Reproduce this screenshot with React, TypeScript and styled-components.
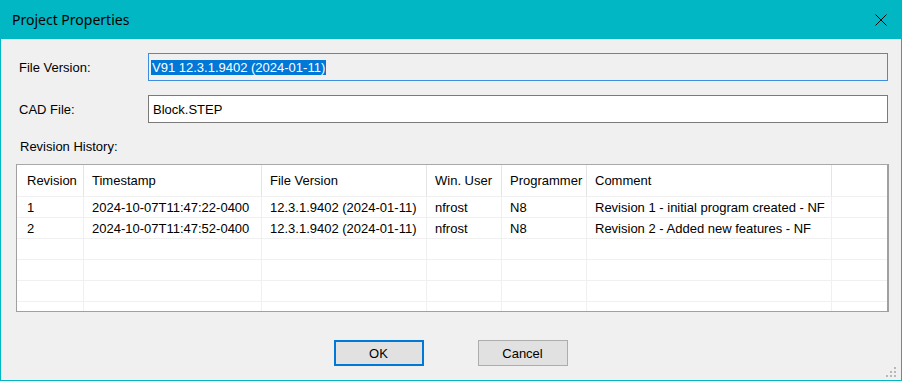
import styled, { createGlobalStyle } from 'styled-components';

const GlobalStyle = createGlobalStyle`
    html, body {
        margin: 0;
        padding: 0;
        background: #f0f0f0;
    }
    * {
        box-sizing: border-box;
    }
`

const columns = [
    { title: 'Revision', width: 67 },
    { title: 'Timestamp', width: 178 },
    { title: 'File Version', width: 165 },
    { title: 'Win. User', width: 75 },
    { title: 'Programmer', width: 85 },
    { title: 'Comment', width: 245 },
];

const rows = [
    ['1', '2024-10-07T11:47:22-0400', '12.3.1.9402 (2024-01-11)', 'nfrost', 'N8', 'Revision 1 - initial program created - NF'],
    ['2', '2024-10-07T11:47:52-0400', '12.3.1.9402 (2024-01-11)', 'nfrost', 'N8', 'Revision 2 - Added new features - NF'],
    ['', '', '', '', '', ''],
    ['', '', '', '', '', ''],
    ['', '', '', '', '', ''],
    ['', '', '', '', '', ''],
];

const gridTemplate = columns.map((c) => `${c.width}px`).join(' ') + ' 1fr';

export const Window = styled.div`
    position: relative;
    display: flex;
    flex-direction: column;
    width: 902px;
    height: 381px;
    background: #f0f0f0;
    border: 1px solid #00b7c3;
    border-top: none;
    font-family: "Liberation Sans", Arial, sans-serif;
    font-size: 13px;
    color: #000;
`

export const TitleBar = styled.div`
    display: flex;
    align-items: center;
    justify-content: space-between;
    height: 39px;
    margin: 0 -1px;
    padding: 0 15px 1px 12px;
    background: #00b7c3;
    flex-shrink: 0;
`

export const Title = styled.span`
    font-family: "Noto Sans", "Open Sans", sans-serif;
    font-size: 14px;
    color: #000;
`

export const CloseIcon = styled.svg`
    width: 12px;
    height: 12px;
    margin-top: 1px;
`

export const Body = styled.div`
    display: flex;
    flex-direction: column;
    flex: 1;
    padding: 14px 13px 0 14px;
`

export const FieldRow = styled.div`
    display: flex;
    align-items: center;
    height: 28px;
    margin-bottom: 14px;
`

export const Label = styled.span`
    width: 133px;
    padding-left: 4px;
    flex-shrink: 0;
`

export const Input = styled.div<{ $readonly?: boolean }>`
    display: flex;
    align-items: center;
    flex: 1;
    height: 28px;
    padding-left: ${(p) => (p.$readonly ? '2px' : '4px')};
    background: ${(p) => (p.$readonly ? '#f0f0f0' : '#ffffff')};
    border: 1px solid ${(p) => (p.$readonly ? '#3d8ee0' : '#7a7a7a')};
`

export const Selected = styled.span`
    background: #0078d7;
    color: #fff;
    line-height: 15px;
    padding: 0 1px;
`

export const SectionLabel = styled.div`
    padding-left: 5px;
    height: 15px;
    line-height: 15px;
    margin-top: 2px;
    margin-bottom: 10px;
`

export const ListView = styled.div`
    height: 148px;
    margin-left: 1px;
    margin-right: -1px;
    background: #fff;
    border: 1px solid #a0a0a0;
    border-right-width: 2px;
    border-top-color: #a8a8a8;
    overflow: hidden;
`

export const HeaderRow = styled.div`
    display: grid;
    grid-template-columns: ${gridTemplate};
    height: 31px;
`

export const HeaderCell = styled.div<{ $first?: boolean }>`
    display: flex;
    align-items: center;
    padding-left: ${(p) => (p.$first ? '10px' : '8px')};
    border-right: 1px solid #e5e5e5;
    white-space: nowrap;
    padding-bottom: 1px;
`

export const Row = styled.div`
    display: grid;
    grid-template-columns: ${gridTemplate};
    height: 21px;
    border-top: 1px solid #f0f0f0;
`

export const Cell = styled.div<{ $first?: boolean }>`
    display: flex;
    align-items: center;
    padding-left: ${(p) => (p.$first ? '10px' : '8px')};
    border-right: 1px solid #f0f0f0;
    white-space: nowrap;
    overflow: hidden;
`

export const Filler = styled.div``

export const Buttons = styled.div`
    display: flex;
    justify-content: center;
    gap: 54px;
    margin-top: 28px;
    padding-right: 2px;
`

export const Button = styled.button<{ $default?: boolean }>`
    width: 90px;
    height: 26px;
    padding: 0;
    font-family: "Liberation Sans", Arial, sans-serif;
    font-size: 13px;
    color: #000;
    background: #e1e1e1;
    border: ${(p) => (p.$default ? '2px solid #0078d7' : '1px solid #adadad')};
`

export const Grip = styled.svg`
    position: absolute;
    right: 5px;
    bottom: 3px;
    width: 10px;
    height: 10px;
`

export default function App() {
    return (
        <>
            <GlobalStyle />
            <Window>
                <TitleBar>
                    <Title>Project Properties</Title>
                    <CloseIcon viewBox="0 0 12 12">
                        <path d="M0.5 0.5 L11.5 11.5 M11.5 0.5 L0.5 11.5" stroke="#000" strokeWidth="1" fill="none" />
                    </CloseIcon>
                </TitleBar>
                <Body>
                    <FieldRow>
                        <Label>File Version:</Label>
                        <Input $readonly>
                            <Selected>V91 12.3.1.9402 (2024-01-11)</Selected>
                        </Input>
                    </FieldRow>
                    <FieldRow>
                        <Label>CAD File:</Label>
                        <Input>Block.STEP</Input>
                    </FieldRow>
                    <SectionLabel>Revision History:</SectionLabel>
                    <ListView>
                        <HeaderRow>
                            {columns.map((c, i) => (
                                <HeaderCell key={c.title} $first={i === 0}>{c.title}</HeaderCell>
                            ))}
                            <Filler />
                        </HeaderRow>
                        {rows.map((r, ri) => (
                            <Row key={ri}>
                                {r.map((v, ci) => (
                                    <Cell key={ci} $first={ci === 0}>{v}</Cell>
                                ))}
                                <Filler />
                            </Row>
                        ))}
                    </ListView>
                    <Buttons>
                        <Button $default>OK</Button>
                        <Button>Cancel</Button>
                    </Buttons>
                </Body>
                <Grip viewBox="0 0 10 10">
                    <rect x="8" y="0" width="2" height="2" fill="#b8b8b8" />
                    <rect x="4" y="4" width="2" height="2" fill="#b8b8b8" />
                    <rect x="8" y="4" width="2" height="2" fill="#b8b8b8" />
                    <rect x="0" y="8" width="2" height="2" fill="#b8b8b8" />
                    <rect x="4" y="8" width="2" height="2" fill="#b8b8b8" />
                    <rect x="8" y="8" width="2" height="2" fill="#b8b8b8" />
                </Grip>
            </Window>
        </>
    );
}
